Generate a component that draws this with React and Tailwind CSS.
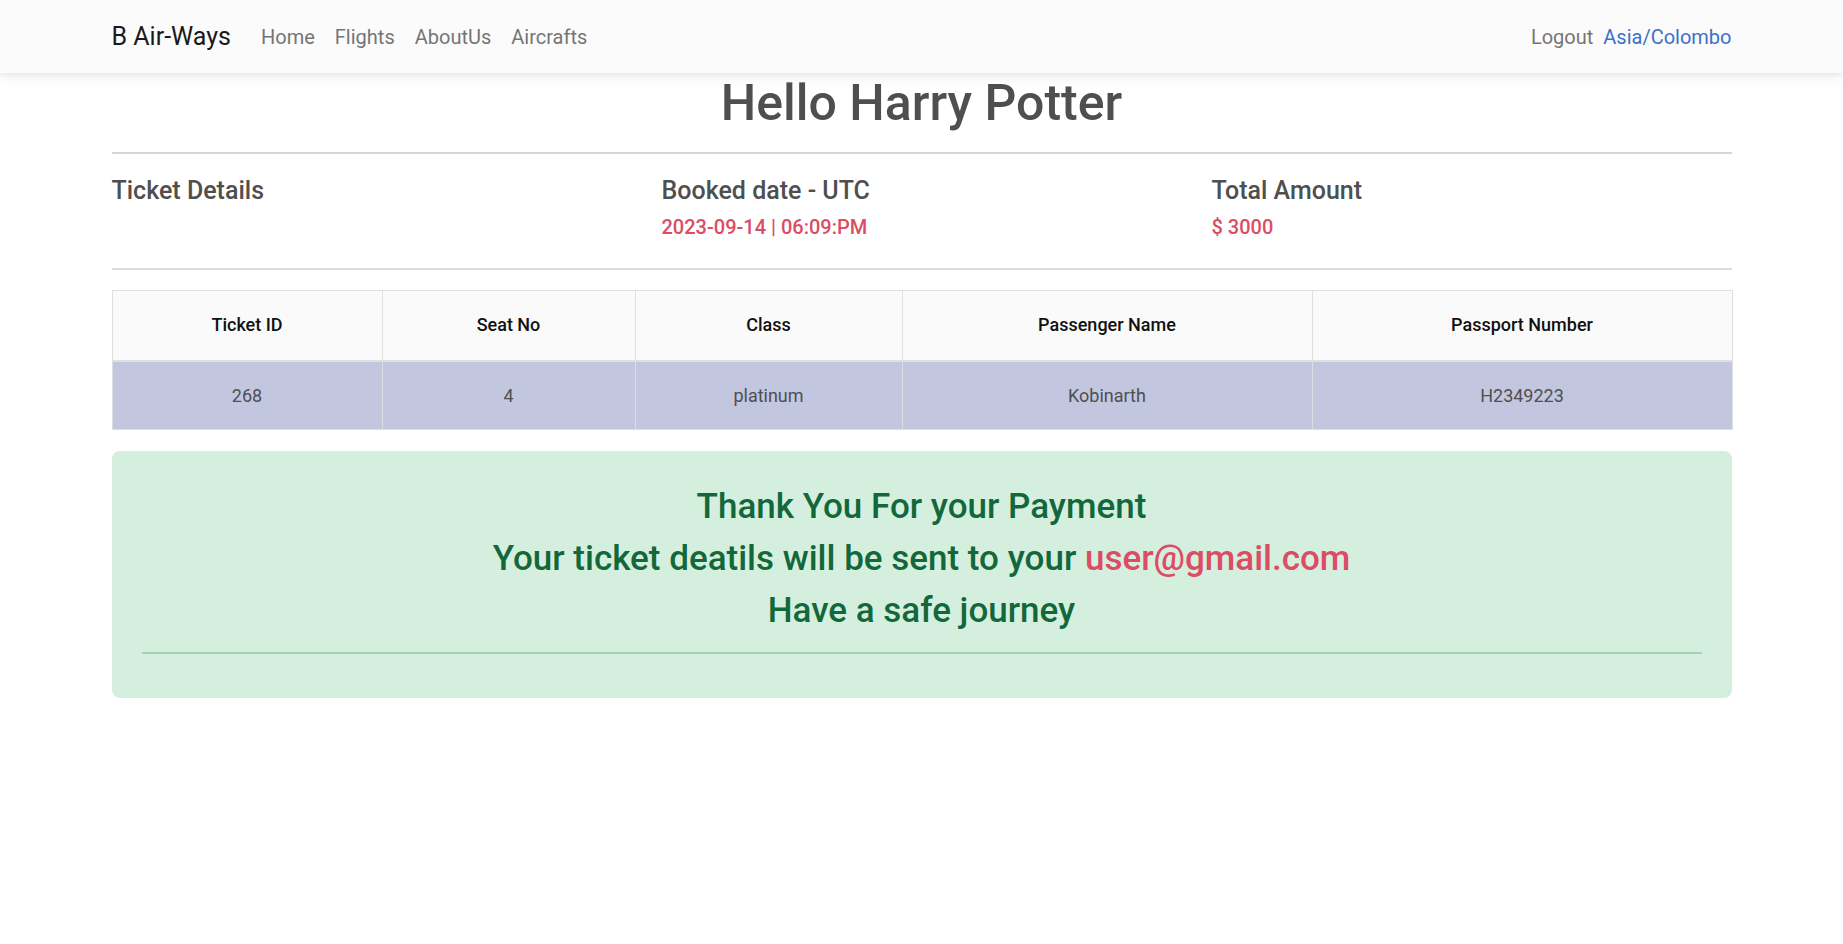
const passengers = [
  { ticketId: 268, seatNo: 4, seatClass: 'platinum', name: 'Kobinarth', passport: 'H2349223' }
];

const columns = [
  { label: 'Ticket ID', width: 'w-[270px]' },
  { label: 'Seat No', width: 'w-[253px]' },
  { label: 'Class', width: 'w-[267px]' },
  { label: 'Passenger Name', width: 'w-[410px]' },
  { label: 'Passport Number', width: 'w-[420px]' }
];

const Navbar = () => (
  <nav className="relative z-10 flex h-[73px] items-center bg-[#fbfbfb] shadow-[0_4px_12px_0_rgba(0,0,0,0.07),0_2px_4px_rgba(0,0,0,0.05)]">
    <div className="mx-auto flex w-[1620px] items-center justify-between">
      <div className="flex items-center">
        <a href="#" className="mr-[20px] text-[25px] leading-[1.5] text-[#1a1a1a]">
          B Air-Ways
        </a>
        <ul className="flex items-center text-[20px] leading-[1.5] text-[#757575]">
          <li><a href="#" className="px-[10px]">Home</a></li>
          <li><a href="#" className="px-[10px]">Flights</a></li>
          <li><a href="#" className="px-[10px]">AboutUs</a></li>
          <li><a href="#" className="px-[10px]">Aircrafts</a></li>
        </ul>
      </div>
      <div className="flex items-center text-[20px] leading-[1.5]">
        <a href="#" className="px-[10px] text-[#757575]">Logout</a>
        <span className="text-[#3b71ca]">Asia/Colombo</span>
      </div>
    </div>
  </nav>
);

const App = () => {
  return (
    <div className="min-h-screen bg-white font-['Roboto',sans-serif] text-[#4f4f4f]">
      <Navbar />

      <main className="mx-auto w-[1620px]">
        <h1 className="text-center text-[50px] font-medium leading-[1.2] text-[#4f4f4f]">
          Hello Harry Potter
        </h1>
        <div className="mt-[19px] h-[2px] bg-[#d6d6d6]" />

        <div className="mt-[22px] grid grid-cols-3 gap-x-[30px]">
          <div>
            <h5 className="text-[25px] font-medium leading-[1.2]">Ticket Details</h5>
          </div>
          <div>
            <h5 className="text-[25px] font-medium leading-[1.2]">Booked date - UTC</h5>
            <p className="mt-[6px] text-[20px] font-medium leading-[1.5] text-[#dc4c64]">
              2023-09-14 | 06:09:PM
            </p>
          </div>
          <div>
            <h5 className="text-[25px] font-medium leading-[1.2]">Total Amount</h5>
            <p className="mt-[6px] text-[20px] font-medium leading-[1.5] text-[#dc4c64]">$ 3000</p>
          </div>
        </div>
        <div className="mt-[26px] h-[2px] bg-[#dcdcdc]" />

        <table className="mt-[20px] w-full table-fixed border-collapse text-[18px] leading-[1.5]">
          <thead>
            <tr className="bg-[#fafafa]">
              {columns.map((col) => (
                <th
                  key={col.label}
                  className={`${col.width} h-[70px] border border-b-2 border-[#e0e0e0] pb-[2px] text-center font-medium text-[#111111]`}
                >
                  {col.label}
                </th>
              ))}
            </tr>
          </thead>
          <tbody>
            {passengers.map((p) => (
              <tr key={p.ticketId} className="bg-[#c3c6df]">
                <td className="h-[69px] border border-[#dedede] text-center text-[#4f4f4f]">{p.ticketId}</td>
                <td className="h-[69px] border border-[#dedede] text-center text-[#4f4f4f]">{p.seatNo}</td>
                <td className="h-[69px] border border-[#dedede] text-center text-[#4f4f4f]">{p.seatClass}</td>
                <td className="h-[69px] border border-[#dedede] text-center text-[#4f4f4f]">{p.name}</td>
                <td className="h-[69px] border border-[#dedede] text-center text-[#4f4f4f]">{p.passport}</td>
              </tr>
            ))}
          </tbody>
        </table>

        <div className="mt-[21px] rounded-[8px] bg-[#d5efdf] px-[30px] pb-[44px] pt-[35px] text-center text-[#12683a]">
          <h3 className="mb-[10px] text-[35px] font-medium leading-[42px]">Thank You For your Payment</h3>
          <h3 className="mb-[10px] text-[35px] font-medium leading-[42px]">
            Your ticket deatils will be sent to your <span className="text-[#dc4c64]">user@gmail.com</span>
          </h3>
          <h3 className="mb-[10px] text-[35px] font-medium leading-[42px]">Have a safe journey</h3>
          <div className="mt-[20px] h-[2px] bg-[#a5cfb6]" />
        </div>
      </main>
    </div>
  );
};

export default App;
